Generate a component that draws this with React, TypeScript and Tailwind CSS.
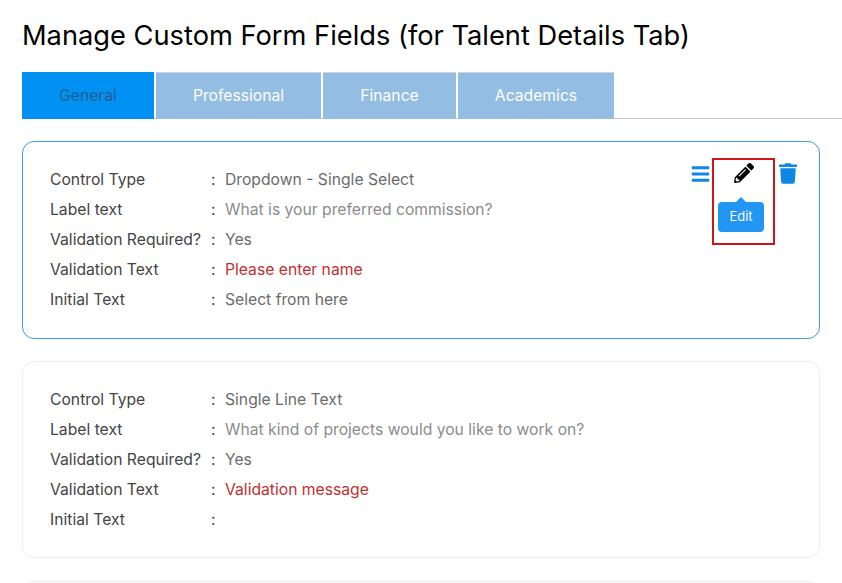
import React from 'react'
import { FaBars, FaPencilAlt, FaTrash } from 'react-icons/fa'

const tabs = [
  { name: 'General', width: 'w-[132px]', active: true },
  { name: 'Professional', width: 'w-[165px]' },
  { name: 'Finance', width: 'w-[133px]' },
  { name: 'Academics', width: 'w-[156px]' },
]

const Row = ({ label, value, valueClass }: { label: string; value?: string; valueClass?: string }) => (
  <div className='flex h-[30px] items-center text-[15.7px]'>
    <span className='w-[161px] text-[#444444]'>{label}</span>
    <span className='w-[14px] text-[#444444]'>:</span>
    <span className={valueClass}>{value}</span>
  </div>
)

const Fields = ({ type, label, message, initial }: { type: string; label: string; message: string; initial?: string }) => (
  <div className='flex flex-col'>
    <Row label='Control Type' value={type} valueClass='text-[#6b6b6b]' />
    <Row label='Label text' value={label} valueClass='text-[#8c8c8c]' />
    <Row label='Validation Required?' value='Yes' valueClass='text-[#6b6b6b]' />
    <Row label='Validation Text' value={message} valueClass='text-[#c03030]' />
    <Row label='Initial Text' value={initial} valueClass='text-[#6b6b6b]' />
  </div>
)

export default function App() {
  return (
    <div className="h-[583px] w-[842px] overflow-hidden bg-white pl-[22px] font-['Inter',sans-serif]">
      <h1 className='pt-[18px] text-[27.25px] leading-[36px] font-normal text-black'>
        Manage Custom Form Fields (for Talent Details Tab)
      </h1>
      {/* Tabs */}
      <div className='mt-[18px] flex h-[47px] gap-[2px] border-b border-[#c9c9c9]'>
        {tabs.map((t) => (
          <div
            key={t.name}
            className={`flex h-[47px] items-center justify-center text-[15.7px] ${t.width} ${
              t.active ? 'bg-[#0091f2] text-[#1f5f92]' : 'border-t border-[#c4d6e6] bg-[#93bde2] text-white'
            }`}
          >
            {t.name}
          </div>
        ))}
      </div>

      <div className='relative mt-[22px] flex h-[198px] w-[798px] justify-between rounded-[12px] border border-[#3f9ade] pt-[23px] pl-[27px]'>
        <Fields
          type='Dropdown - Single Select'
          label='What is your preferred commission?'
          message='Please enter name'
          initial='Select from here'
        />
        <div className='mt-[-2px] mr-[22px] flex h-[24px] items-start'>
          <FaBars className='mt-[1px] h-[20px] w-[19px] text-[#0f87e4]' />
          <FaPencilAlt className='ml-[24px] h-[20px] w-[20px] text-black' />
          <FaTrash className='ml-[25px] h-[21px] w-[18px] text-[#0f87e4]' />
        </div>
        {/* highlight box + tooltip */}
        <div className='absolute top-[16px] left-[689px] h-[87px] w-[63px] border-2 border-[#d0141c]' />
        <div className='absolute top-[60px] left-[695px] flex h-[30px] w-[46px] items-center justify-center rounded-[4px] bg-[#2196f3] text-[13px] text-white'>
          Edit
          <span className='absolute top-[-5px] left-[18px] h-0 w-0 border-x-[5px] border-b-[5px] border-x-transparent border-b-[#2196f3]' />
        </div>
      </div>

      <div className='mt-[22px] flex h-[197px] w-[798px] rounded-[12px] border border-[#eeeeee] pt-[23px] pl-[27px]'>
        <Fields
          type='Single Line Text'
          label='What kind of projects would you like to work on?'
          message='Validation message'
        />
      </div>

      <div className='mt-[23px] h-[40px] w-[798px] rounded-[12px] border border-[#eeeeee]' />
    </div>
  )
}
